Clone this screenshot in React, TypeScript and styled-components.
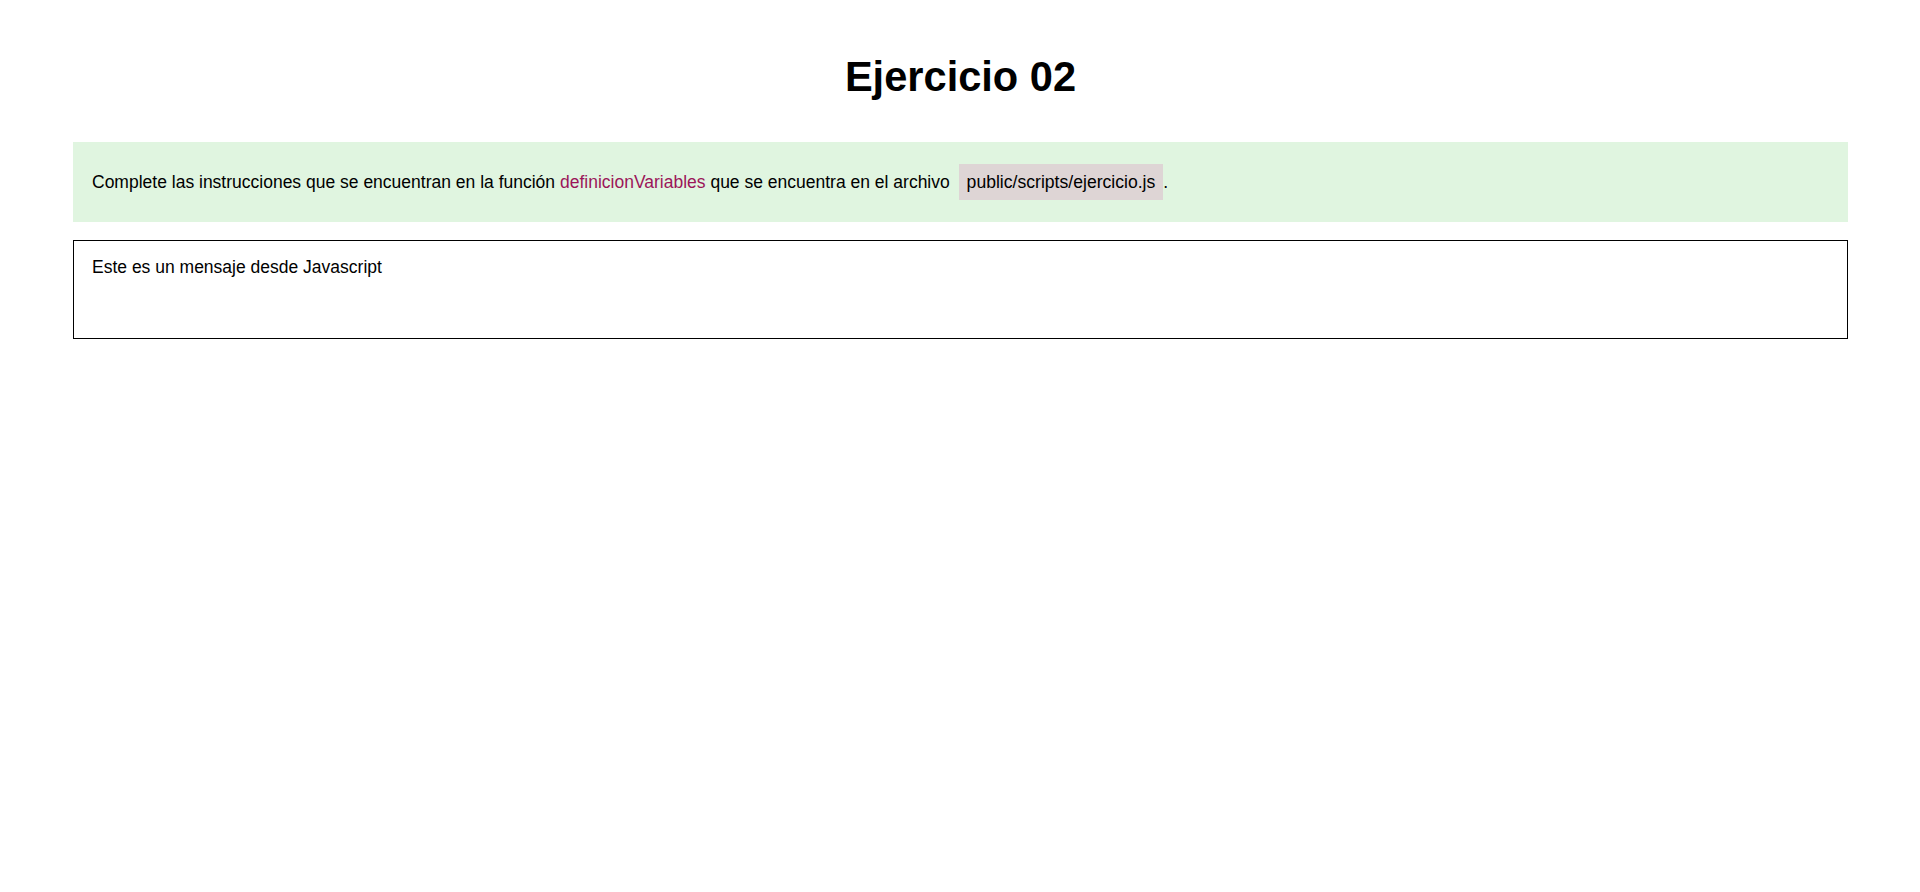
import React from "react";
import styled, { createGlobalStyle } from "styled-components";

const GlobalStyle = createGlobalStyle`
  html, body {
    margin: 0;
    padding: 0;
    background: #ffffff;
  }
  body {
    font-family: "Liberation Sans", Arial, sans-serif;
    color: #000000;
  }
`;

const Page = styled.main`
  display: flex;
  flex-direction: column;
  padding: 53px 72px 0 73px;
`;

const Title = styled.h1`
  margin: 0 0 41px;
  text-align: center;
  font-size: 41.6px;
  font-weight: 700;
  line-height: 48px;
`;

const Instructions = styled.section`
  display: flex;
  align-items: center;
  height: 80px;
  box-sizing: border-box;
  padding: 0 19px;
  background: #e0f5e0;
  font-size: 17.5px;
`;

const Paragraph = styled.p`
  margin: 0;
  line-height: 20px;
`;

const FunctionName = styled.span`
  color: #9b1659;
`;

const FilePath = styled.span`
  display: inline-block;
  margin-left: 4px;
  padding: 8px 8px 8px 8px;
  background: #ded5d5;
  line-height: 20px;
  font-size: 17.6px;
`;

const Output = styled.section`
  margin-top: 18px;
  height: 99px;
  box-sizing: border-box;
  border: 1px solid #000000;
  padding: 16px 18px;
  font-size: 17.5px;
  line-height: 20px;
`;

export default function App() {
  return (
    <>
      <GlobalStyle />
      <Page>
        <Title>Ejercicio 02</Title>
        <Instructions>
          <Paragraph>
            Complete las instrucciones que se encuentran en la función{" "}
            <FunctionName>definicionVariables</FunctionName> que se encuentra en el
            archivo <FilePath>public/scripts/ejercicio.js</FilePath>.
          </Paragraph>
        </Instructions>
        <Output>Este es un mensaje desde Javascript</Output>
      </Page>
    </>
  );
}
